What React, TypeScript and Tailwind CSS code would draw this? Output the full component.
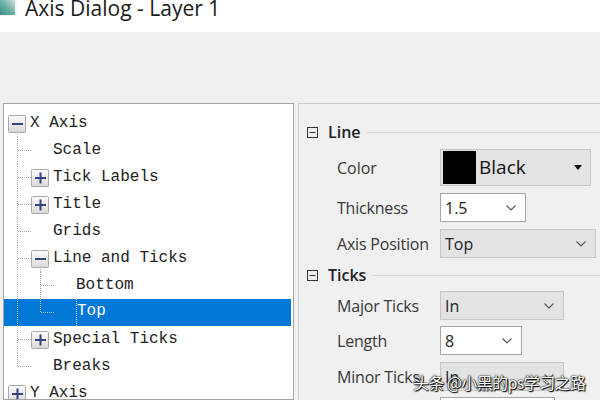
import React from "react";

type Row = { t: string; L: number; box?: "-" | "+"; sel?: boolean };

const rows: Row[] = [
  { t: "X Axis", L: 0, box: "-" },
  { t: "Scale", L: 1 },
  { t: "Tick Labels", L: 1, box: "+" },
  { t: "Title", L: 1, box: "+" },
  { t: "Grids", L: 1 },
  { t: "Line and Ticks", L: 1, box: "-" },
  { t: "Bottom", L: 2 },
  { t: "Top", L: 2, sel: true },
  { t: "Special Ticks", L: 1, box: "+" },
  { t: "Breaks", L: 1 },
  { t: "Y Axis", L: 0, box: "+" },
];

function Gutter({ i, row }: { i: number; row: Row }) {
  const w = 26 + 23 * row.L;
  const c = 13 + 23 * row.L;
  const lc = row.sel ? "#9fc6ee" : "#a8a8a8";
  const lines: React.ReactNode[] = [];
  const v = (x: number, y1: number, y2: number, k: string) =>
    lines.push(<line key={k} x1={x + 0.5} x2={x + 0.5} y1={y1} y2={y2} stroke={lc} strokeDasharray="1 1" />);
  const h = (x1: number, x2: number, k: string) =>
    lines.push(<line key={k} x1={x1} x2={x2} y1={13.5} y2={13.5} stroke={lc} strokeDasharray="1 1" />);
  if (i === 0) v(13, 22, 27, "v0");
  else if (i >= 1 && i <= 8) v(13, 0, 27, "v0");
  else if (i === 9) v(13, 0, 14, "v0");
  if (i === 5) v(36, 22, 27, "v1");
  else if (i === 6) v(36, 0, 27, "v1");
  else if (i === 7) v(36, 0, 14, "v1");
  if (row.L === 1) h(14, 27, "h1");
  if (row.L === 2) h(37, 50, "h2");
  return (
    <svg width={w} height={27} className="shrink-0">
      <defs>
        <linearGradient id={`bg${i}`} x1="0" y1="0" x2="0" y2="1">
          <stop offset="0" stopColor="#fbfbfb" />
          <stop offset="1" stopColor="#d9d9d9" />
        </linearGradient>
      </defs>
      {lines}
      {row.box && (
        <g>
          <rect x={c - 8.5} y={5.5} width={17} height={17} fill={`url(#bg${i})`} stroke="#a9a9a9" rx={1} />
          <line x1={c - 5} x2={c + 6} y1={14} y2={14} stroke="#34437c" strokeWidth={2} />
          {row.box === "+" && <line x1={c + 0.5} x2={c + 0.5} y1={8.5} y2={19.5} stroke="#34437c" strokeWidth={2} />}
        </g>
      )}
    </svg>
  );
}

function Chevron() {
  return (
    <svg width="10" height="6" viewBox="0 0 10 6" className="shrink-0">
      <path d="M0.5 0.5 L5 5 L9.5 0.5" fill="none" stroke="#555" strokeWidth="1.1" />
    </svg>
  );
}

function SectionIcon() {
  return (
    <svg width="11" height="11" viewBox="0 0 11 11" className="shrink-0">
      <rect x="0.5" y="0.5" width="10" height="10" fill="none" stroke="#333" />
      <line x1="2.5" x2="8.5" y1="5.5" y2="5.5" stroke="#333" />
    </svg>
  );
}

function Section({ title }: { title: string }) {
  return (
    <div className="flex items-center h-[20px]">
      <SectionIcon />
      <span className="ml-[10px] text-[16px] font-semibold text-[#222] leading-none">{title}</span>
      <div className="flex-1 h-px bg-[#d4d4d4] ml-[6px]" />
    </div>
  );
}

function Field({
  label,
  value,
  w,
  white,
  mt,
}: {
  label: string;
  value: string;
  w: string;
  white?: boolean;
  mt: string;
}) {
  return (
    <div className={`flex items-center h-[29px] ${mt}`}>
      <div className="w-[133px] pl-[30px] text-[16px] text-[#383838] whitespace-nowrap tracking-[-0.2px]">{label}</div>
      <div
        className={`${w} h-full flex items-center justify-between pl-[4px] pr-[9px] border ${
          white ? "bg-white border-[#a5a5a5]" : "bg-[#e3e3e3] border-[#c6c6c6]"
        } text-[16px] text-[#222]`}
      >
        <span>{value}</span>
        <Chevron />
      </div>
    </div>
  );
}

export default function App() {
  return (
    <div className="w-[600px] h-[400px] overflow-hidden relative bg-[#f0f0f0] flex flex-col">
      {/* Title bar */}
      <div className="h-[32px] bg-white flex items-start shrink-0" style={{ fontFamily: "'Open Sans', 'Noto Sans', sans-serif" }}>
        <div className="w-[17px] h-[17px] -mt-[1px] bg-gradient-to-tr from-[#2f8f82] via-[#6fb3a8] to-[#d7e3e0] border-r-2 border-b border-[#f4f4f4] shrink-0" />
        <div className="ml-[8px] text-[21px] leading-none -mt-[2px] text-[#1a1a1a] whitespace-nowrap">
          Axis Dialog - Layer 1
        </div>
      </div>
      {/* toolbar area */}
      <div className="h-[71px] shrink-0" />
      {/* panels */}
      <div className="flex flex-1 min-h-0">
        {/* tree */}
        <div
          className="ml-[3px] w-[291px] bg-white border border-[#a3a3a3] pt-[6px] shrink-0 overflow-hidden"
          style={{ fontFamily: "'Liberation Mono', 'DejaVu Sans Mono', monospace" }}
        >
          {rows.map((r, i) => (
            <div
              key={i}
              className={`flex items-center h-[27px] mr-[2px] ${r.sel ? "bg-[#0078d7] text-white" : "text-[#222]"}`}
            >
              <Gutter i={i} row={r} />
              <span
                className={`text-[16px] whitespace-nowrap leading-[25px] ${
                  r.sel ? "border-l border-dotted border-[#cfe3f7] self-stretch flex-1" : ""
                }`}
              >
                {r.t}
              </span>
            </div>
          ))}
        </div>
        {/* properties */}
        <div
          className="ml-[4px] flex-1 border-l border-t border-[#c9c9c9] bg-[#f0f0f0] pl-[8px] pt-[18px] overflow-hidden"
          style={{ fontFamily: "'Open Sans', 'Noto Sans', sans-serif" }}
        >
          <Section title="Line" />
          <div className="flex items-center h-[37px] mt-[7px]">
            <div className="w-[133px] pl-[30px] text-[16px] text-[#383838]">Color</div>
            <div className="w-[151px] h-full flex items-center bg-[#e3e3e3] border border-[#c6c6c6] pl-[2px] pr-[8px]">
              <div className="w-[33px] h-[33px] bg-black shrink-0" />
              <span className="ml-[3px] text-[19px] font-medium text-[#111] flex-1">Black</span>
              <svg width="8" height="5" viewBox="0 0 8 5">
                <path d="M0 0 L8 0 L4 5 Z" fill="#111" />
              </svg>
            </div>
          </div>
          <Field label="Thickness" value="1.5" w="w-[86px]" white mt="mt-[7px]" />
          <Field label="Axis Position" value="Top" w="w-[156px]" mt="mt-[7px]" />
          <div className="mt-[7px]">
            <Section title="Ticks" />
          </div>
          <Field label="Major Ticks" value="In" w="w-[124px]" mt="mt-[6px]" />
          <Field label="Length" value="8" w="w-[82px]" white mt="mt-[6px]" />
          <Field label="Minor Ticks" value="In" w="w-[124px]" mt="mt-[7px]" />
          <Field label="" value="" w="w-[115px]" white mt="mt-[6px]" />
        </div>
      </div>
      {/* watermark */}
      <div
        className="absolute left-[413px] top-[370px] text-[16px] tracking-[-0.6px] text-white whitespace-nowrap [text-shadow:0_0_2px_#000,0_0_1px_#000,1px_1px_1px_#000]"
        style={{ fontFamily: "'Noto Sans CJK SC', 'Noto Sans', sans-serif" }}
      >
        头条 @小黑的ps学习之路
      </div>
    </div>
  );
}
